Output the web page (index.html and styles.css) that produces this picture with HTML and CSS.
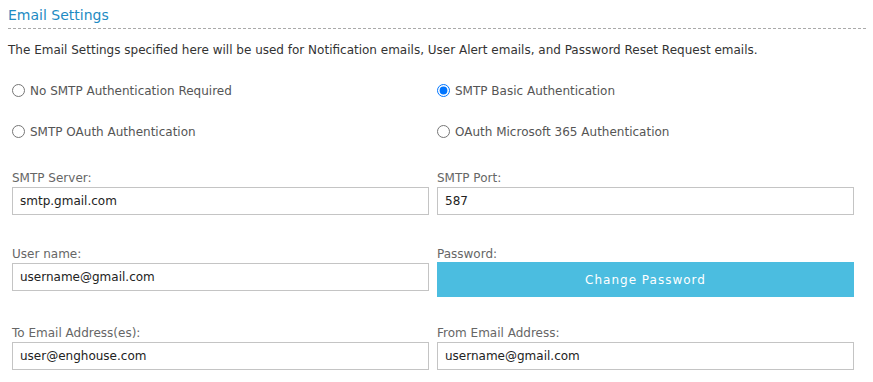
FILE: index.html
```html
<!DOCTYPE html>
<html lang="en">
<head>
    <meta charset="UTF-8">
    <meta name="viewport" content="width=device-width, initial-scale=1.0">
    <title>Email Settings</title>
    <link rel="stylesheet" href="styles.css">
</head>
<body>
    <div class="settings-page">
        <h2 class="section-title">Email Settings</h2>
        <p class="intro">The Email Settings specified here will be used for Notification emails, User Alert emails, and Password Reset Request emails.</p>

        <div class="auth-options">
            <label class="auth-option"><input type="radio" name="auth"> No SMTP Authentication Required</label>
            <label class="auth-option"><input type="radio" name="auth" checked> SMTP Basic Authentication</label>
            <label class="auth-option"><input type="radio" name="auth"> SMTP OAuth Authentication</label>
            <label class="auth-option"><input type="radio" name="auth"> OAuth Microsoft 365 Authentication</label>
        </div>

        <div class="fields">
            <div class="field">
                <label class="field-label" for="smtp-server">SMTP Server:</label>
                <input class="text-input" id="smtp-server" type="text" value="smtp.gmail.com">
            </div>
            <div class="field">
                <label class="field-label" for="smtp-port">SMTP Port:</label>
                <input class="text-input" id="smtp-port" type="text" value="587">
            </div>
            <div class="field">
                <label class="field-label" for="user-name">User name:</label>
                <input class="text-input" id="user-name" type="text" value="username@gmail.com">
            </div>
            <div class="field">
                <label class="field-label">Password:</label>
                <button class="change-btn" type="button">Change Password</button>
            </div>
            <div class="field">
                <label class="field-label" for="to-email">To Email Address(es):</label>
                <input class="text-input" id="to-email" type="text" value="user@enghouse.com">
            </div>
            <div class="field">
                <label class="field-label" for="from-email">From Email Address:</label>
                <input class="text-input" id="from-email" type="text" value="username@gmail.com">
            </div>
        </div>
    </div>
</body>
</html>
```

FILE: styles.css
```css
* {
    box-sizing: border-box;
}

body {
    margin: 0;
    background: #fff;
    font-family: Tahoma, "DejaVu Sans", sans-serif;
    font-size: 12px;
    color: #333;
}

.settings-page {
    padding: 6px 7px 0 8px;
}

.section-title {
    margin: 0;
    padding-bottom: 4px;
    font-size: 14px;
    line-height: 18px;
    font-weight: normal;
    color: #1e8bc3;
    border-bottom: 1px dashed #aaa;
}

.intro {
    margin: 12px 0 0;
    line-height: 18px;
    color: #333;
}

.auth-options {
    display: grid;
    grid-template-columns: 417px 417px;
    column-gap: 8px;
    margin-top: 11px;
    padding-left: 4px;
}

.auth-option {
    display: flex;
    align-items: center;
    height: 41px;
    color: #555;
}

.auth-option input {
    width: 13px;
    height: 13px;
    margin: 0 5px 0 0;
    accent-color: #0075ff;
}

.fields {
    display: grid;
    grid-template-columns: 417px 417px;
    column-gap: 8px;
    row-gap: 28px;
    margin-top: 18px;
    padding-left: 4px;
}

.field {
    display: flex;
    flex-direction: column;
    min-height: 48px;
}

.field-label {
    line-height: 16px;
    margin-bottom: 1px;
    color: #666;
}

.text-input {
    width: 100%;
    height: 28px;
    padding: 0 7px;
    border: 1px solid #c4c4c4;
    border-radius: 0;
    font-family: inherit;
    font-size: 12px;
    color: #222;
    outline: none;
}

.change-btn {
    width: 100%;
    height: 35px;
    margin-top: -1px;
    border: none;
    background: #4bbde0;
    color: #fff;
    font-family: inherit;
    font-size: 12px;
    letter-spacing: 1px;
    cursor: pointer;
}
```
